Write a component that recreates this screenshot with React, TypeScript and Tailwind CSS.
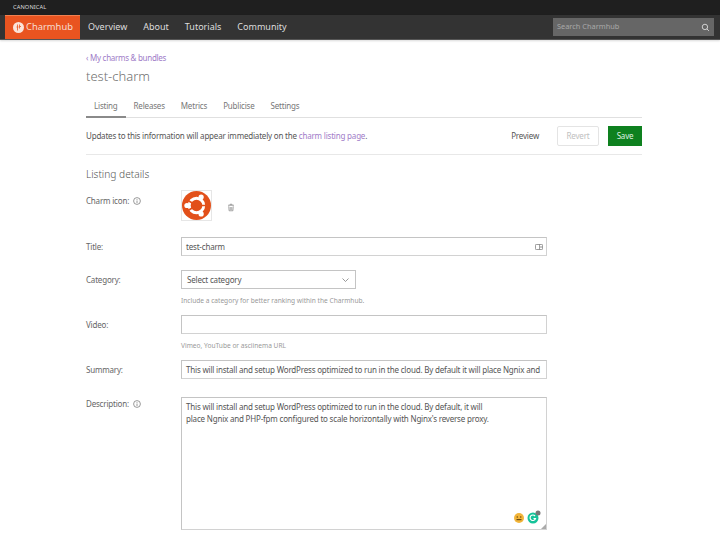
import React from "react";

function Info() {
  return (
    <svg width="8" height="8" viewBox="0 0 16 16" fill="none" stroke="#777" strokeWidth="1.5" className="shrink-0">
      <circle cx="8" cy="8" r="6.8" />
      <path d="M8 7v5M8 4v1.6" />
    </svg>
  );
}

function UbuntuLogo({ size }: { size: number }) {
  return (
    <svg width={size} height={size} viewBox="0 0 100 100">
      <circle cx="50" cy="50" r="50" fill="#e2501a" />
      <circle cx="50" cy="50" r="25" fill="none" stroke="#fff" strokeWidth="10" />
      <path d="M50 50L12 28M50 50L12 72M50 50L94 50" stroke="#e2501a" strokeWidth="6" />
      <circle cx="17" cy="50" r="9" fill="#fff" />
      <circle cx="66" cy="21" r="9" fill="#fff" />
      <circle cx="66" cy="79" r="9" fill="#fff" />
    </svg>
  );
}

function BrandMark() {
  return (
    <svg width="11" height="11" viewBox="0 0 22 22" className="shrink-0">
      <circle cx="11" cy="11" r="11" fill="#fbe4da" />
      <path d="M9 5v12M13 5v8M7 10h4M13 9h3" stroke="#e95420" strokeWidth="1.6" fill="none" />
    </svg>
  );
}

function Row({ label, info, className, children }: { label: string; info?: boolean; className: string; children: React.ReactNode }) {
  return (
    <div className={`flex ${className}`}>
      <div className="w-[95px] shrink-0 flex items-center gap-[4px] h-[13px] text-[8px] tracking-[-0.19px] text-[#666]">
        <span>{label}</span>
        {info && <Info />}
      </div>
      <div className="flex-1 min-w-0">{children}</div>
    </div>
  );
}

const inputBase = "w-[366px] bg-white border border-[#d2d2d2] border-t-[#c4c4c4] border-l-[#c4c4c4] text-[8px] tracking-[-0.19px] text-[#555] px-[4px]";

export default function App() {
  return (
    <div className="w-[720px] h-[535px] overflow-hidden bg-white font-['Noto_Sans','Open_Sans',sans-serif] text-[#555]">
      <div className="h-[15px] bg-[#1f1f1f] pl-[13px] flex items-center text-[5.7px] tracking-[0.1px] text-[#ddd]">CANONICAL</div>
      <header className="h-[25px] bg-[#333333] border-b border-[#555] shadow-[0_1px_2px_rgba(0,0,0,0.15)] flex">
        <div className="ml-[5px] w-[75px] bg-[#e95420] flex items-center pl-[8px] gap-[2px] text-[9.4px] text-[#f6dcd0] border-t border-[#f08050]">
          <BrandMark />
          <span>Charmhub</span>
        </div>
        <nav className="flex items-center pl-[8px] gap-[16px] text-[9px] text-[#ddd]">
          <span>Overview</span>
          <span>About</span>
          <span>Tutorials</span>
          <span>Community</span>
        </nav>
        <div className="ml-auto mr-[6px] mt-[3px] w-[161px] h-[18px] bg-[#666666] flex items-center justify-between px-[4px] text-[7.4px] text-[#a8a8a8]">
          <span>Search Charmhub</span>
          <svg width="9" height="9" viewBox="0 0 16 16" fill="none" stroke="#ddd" strokeWidth="1.6">
            <circle cx="7" cy="7" r="4.8" />
            <path d="M10.5 10.5L14 14" />
          </svg>
        </div>
      </header>

      <main className="w-[556px] ml-[86px]">
        <div className="mt-[12px] text-[8px] tracking-[-0.28px] leading-[12px] text-[#a07cc8]">‹ My charms &amp; bundles</div>
        <h1 className="mt-[4px] text-[13px] leading-[17px] text-[#707070] font-light">test-charm</h1>

        <div className="mt-[13px] flex border-b border-[#e0e0e0] h-[20px] text-[8px] tracking-[-0.19px] text-[#777]">
          <span className="px-[8px] pt-[2px] text-[#777] border-b-2 border-[#8a8a8a] h-[20px]">Listing</span>
          <span className="px-[8px] pt-[2px]">Releases</span>
          <span className="px-[8px] pt-[2px]">Metrics</span>
          <span className="px-[8px] pt-[2px]">Publicise</span>
          <span className="px-[8px] pt-[2px]">Settings</span>
        </div>

        <div className="h-[37px] flex items-center border-b border-[#e8e8e8] text-[8px] tracking-[-0.19px] text-[#555]">
          <span>
            Updates to this information will appear immediately on the <span className="text-[#a07cc8]">charm listing page</span>.
          </span>
          <span className="ml-auto">Preview</span>
          <span className="ml-[18px] w-[42px] h-[20px] flex items-center justify-center border border-[#e4e4e4] rounded-[2px] text-[#c0c0c0]">Revert</span>
          <span className="ml-[9px] w-[34px] h-[20px] flex items-center justify-center bg-[#0e811f] text-[#dff0e0]">Save</span>
        </div>

        <h2 className="mt-[12px] text-[10.2px] leading-[15px] text-[#555] font-light">Listing details</h2>

        <Row label="Charm icon:" info className="mt-[12px]">
          <div className="flex items-center">
            <div className="w-[31px] h-[31px] border border-[#e6e6e6] flex items-center justify-center -mt-[4px]">
              <UbuntuLogo size={29} />
            </div>
            <svg width="8" height="9" viewBox="0 0 16 16" fill="none" stroke="#888" strokeWidth="1.5" className="ml-[15px]">
              <path d="M2 3.5h12M6 3.5V1.5h4v2M3.5 5.5l.7 9h7.6l.7-9M6.5 7v6M9.5 7v6" />
            </svg>
          </div>
        </Row>

        <Row label="Title:" className="mt-[16px] items-center">
          <div className={`${inputBase} h-[19px] flex items-center justify-between`}>
            <span>test-charm</span>
            <svg width="8" height="6" viewBox="0 0 16 12" className="-mr-[1px]">
              <rect x="0.8" y="0.8" width="14.4" height="10.4" rx="2" fill="none" stroke="#777" strokeWidth="1.6" />
              <path d="M9 1v10" stroke="#777" strokeWidth="1.4" />
              <circle cx="12" cy="6" r="1.5" fill="#777" />
            </svg>
          </div>
        </Row>

        <Row label="Category:" className="mt-[14px] items-center">
          <div className="w-[175px] h-[19px] border border-[#c4c4c4] flex items-center justify-between pl-[5px] pr-[5px] text-[8px] tracking-[-0.19px] text-[#555]">
            <span>Select category</span>
            <svg width="9" height="6" viewBox="0 0 12 8" fill="none" stroke="#777" strokeWidth="1">
              <path d="M2 2l4 4 4-4" />
            </svg>
          </div>
        </Row>

        <p className="ml-[95px] mt-[7px] text-[6.6px] leading-[10px] text-[#999]">Include a category for better ranking within the Charmhub.</p>

        <Row label="Video:" className="mt-[9px] items-center">
          <div className={`${inputBase} h-[19px]`} />
        </Row>

        <p className="ml-[95px] mt-[7px] text-[6.6px] leading-[10px] text-[#999]">Vimeo, YouTube or asciinema URL</p>

        <Row label="Summary:" className="mt-[9px] items-center">
          <div className={`${inputBase} h-[19px] flex items-center whitespace-nowrap overflow-hidden`}>
            This will install and setup WordPress optimized to run in the cloud. By default it will place Ngnix and
          </div>
        </Row>

        <Row label="Description:" info className="mt-[18px]">
          <div className={`${inputBase} relative h-[133px] pt-[3px] leading-[12px]`}>
            <div>This will install and setup WordPress optimized to run in the cloud. By default, it will</div>
            <div>place Ngnix and PHP-fpm configured to scale horizontally with Nginx's reverse proxy.</div>
            <svg width="10" height="10" viewBox="0 0 20 20" className="absolute right-[22px] bottom-[6px]">
              <circle cx="10" cy="10" r="10" fill="#f2b53a" />
              <circle cx="6.5" cy="8" r="1.5" fill="#6b4a10" />
              <circle cx="13.5" cy="8" r="1.5" fill="#6b4a10" />
              <rect x="5" y="12" width="10" height="2.4" fill="#6b4a10" />
            </svg>
            <svg width="14" height="14" viewBox="0 0 28 28" className="absolute right-[5px] bottom-[5px]">
              <circle cx="12" cy="16" r="11" fill="#15c39a" />
              <path d="M16 12a5.5 5.5 0 1 0 1 5h-4" fill="none" stroke="#fff" strokeWidth="2.4" />
              <circle cx="22" cy="6" r="5" fill="#777" />
            </svg>
            <svg width="5" height="5" viewBox="0 0 5 5" className="absolute right-0 bottom-0">
              <path d="M5 0V5H0Z" fill="#aaa" />
            </svg>
          </div>
        </Row>
      </main>
    </div>
  );
}
